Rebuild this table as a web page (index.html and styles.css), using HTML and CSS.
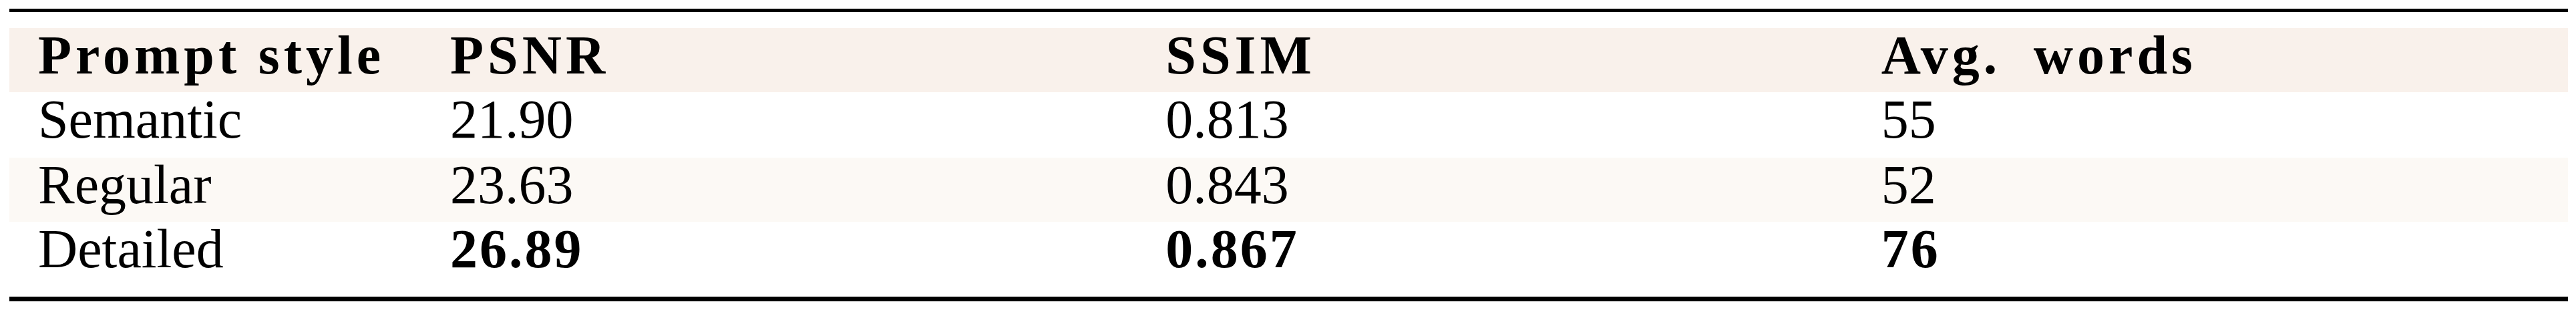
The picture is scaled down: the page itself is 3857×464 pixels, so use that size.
FILE: index.html
```html
<!DOCTYPE html>
<html>
<head>
    <meta charset="utf-8">
    <title>Prompt style comparison</title>
    <link rel="stylesheet" href="styles.css">
</head>
<body>
    <div class="results">
        <table class="results-table">
            <thead>
                <tr class="head-row">
                    <th class="col-style">Prompt style</th>
                    <th>PSNR</th>
                    <th>SSIM</th>
                    <th class="avg-words">Avg. words</th>
                </tr>
            </thead>
            <tbody>
                <tr class="row-tall">
                    <td>Semantic</td>
                    <td>21.90</td>
                    <td>0.813</td>
                    <td>55</td>
                </tr>
                <tr class="stripe">
                    <td>Regular</td>
                    <td>23.63</td>
                    <td>0.843</td>
                    <td>52</td>
                </tr>
                <tr>
                    <td>Detailed</td>
                    <td class="best">26.89</td>
                    <td class="best">0.867</td>
                    <td class="best">76</td>
                </tr>
            </tbody>
        </table>
    </div>
</body>
</html>
```

FILE: styles.css
```css
body {
    margin: 0;
    background: white;
    font-family: 'Liberation Serif', 'Times New Roman', serif;
    color: black;
}

.results {
    margin: 13px 12px 0 14px;
    padding: 24px 0 16px;
    border-top: 5px solid black;
    border-bottom: 7px solid black;
}

.results-table {
    width: 100%;
    border-collapse: collapse;
    border-spacing: 0;
    table-layout: fixed;
    font-size: 82px;
    line-height: 82px;
}

.results-table th,
.results-table td {
    height: 96px;
    padding: 0 0 0 43px;
    text-align: left;
    vertical-align: top;
    white-space: nowrap;
}

.results-table th {
    font-weight: bold;
    letter-spacing: 6px;
}

.col-style {
    width: 574px;
}

.avg-words {
    word-spacing: 22px;
}

.head-row {
    background: #f9f1eb;
}

.row-tall td {
    height: 98px;
}

.stripe {
    background: #fcf9f5;
}

.best {
    font-weight: bold;
    letter-spacing: 3px;
}
```
